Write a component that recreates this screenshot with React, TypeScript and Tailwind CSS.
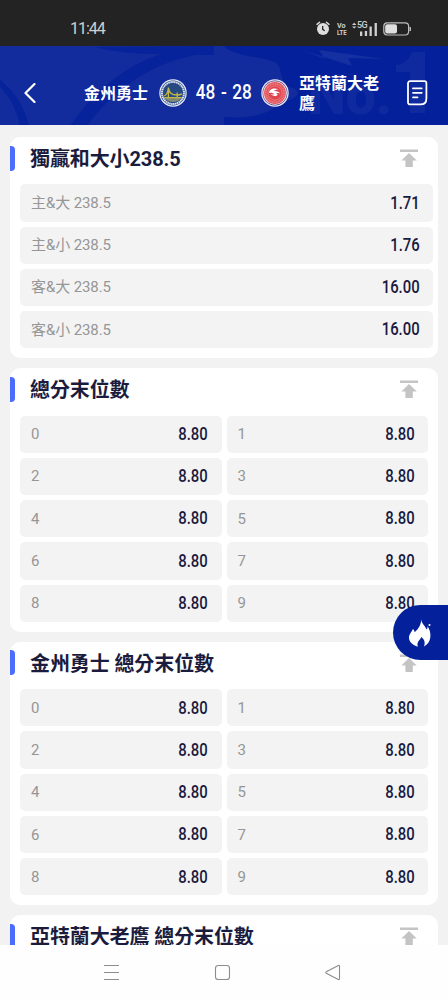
import { clsx } from "clsx";

type Option = { label: string; odds: string };
type Market = { title: string; wide?: boolean; options: Option[] };

const DIGITS: Option[] = Array.from({ length: 10 }, (_, i) => ({ label: String(i), odds: "8.80" }));

const MARKETS: Market[] = [
  {
    title: "獨贏和大小238.5",
    wide: true,
    options: [
      { label: "主&大 238.5", odds: "1.71" },
      { label: "主&小 238.5", odds: "1.76" },
      { label: "客&大 238.5", odds: "16.00" },
      { label: "客&小 238.5", odds: "16.00" },
    ],
  },
  { title: "總分末位數", options: DIGITS },
  { title: "金州勇士 總分末位數", options: DIGITS },
  { title: "亞特蘭大老鷹 總分末位數", options: [] },
];

function StatusBar() {
  return (
    <div className="flex h-[45.5px] shrink-0 items-center bg-[#232323] pl-[70px] pt-[12px] text-[#d0d0d0]">
      <span className="w-[245px] text-[16px] leading-none tracking-[-1px]">11:44</span>
      <svg width="14" height="15" viewBox="0 0 14 15" fill="none" className="ml-[1px]">
        <circle cx="7" cy="8" r="6" fill="#dedede" />
        <path d="M1 3.4 3.6 1.2M13 3.4l-2.6-2.2" stroke="#dedede" strokeWidth="1.4" strokeLinecap="round" />
        <path d="M6.7 5v3.4l2 1.3" stroke="#232323" strokeWidth="1.3" />
      </svg>
      <div className="ml-[7px] w-[10px] text-[8px] font-bold leading-[7px]">
        <div className="origin-left scale-x-[0.9]">Vo</div>
        <div className="origin-left scale-x-[0.75]">LTE</div>
      </div>
      <div className="relative ml-[5px] h-[14px] w-[26px]">
        <svg width="26" height="14" viewBox="0 0 26 14" fill="#d0d0d0">
          <path d="m0 3 2.2-2.3 2.200 2.300zM0 4.400h4.400L2.200 6.600z" />
          <path d="M8 9.500h2.300V14H8zM12.800 9h2.300v5h-2.300zM17.500 4.500h2.300V14h-2.300zM22.600 1h2.300v13h-2.300z" />
        </svg>
        <span className="absolute left-[5px] top-[-1px] text-[9px] font-medium leading-[9px] tracking-[-0.5px]">5G</span>
      </div>
      <svg width="29" height="14" viewBox="0 0 29 14" fill="none" className="ml-[5px]">
        <rect x="0.8" y="0.8" width="24.8" height="12.2" rx="3.4" stroke="#bebebe" strokeWidth="1.2" />
        <rect x="2.2" y="2.2" width="11.8" height="9.4" rx="2" fill="#dedede" />
        <path d="M27.2 5v4" stroke="#bebebe" strokeWidth="1.5" />
      </svg>
    </div>
  );
}

function HeaderArt() {
  return (
    <svg className="absolute inset-0" width="448" height="80" viewBox="0 0 448 80" fill="none">
      <path d="M0 0h448v80H0z" fill="#122b9d" />
      <path d="M95 1c24 6 43 7 66 7-39 13-68 39-91 72h17c25-34 61-62 108-71h19V0z" fill="#06239b" />
      <path d="M0 34c14 11 25 27 29 46h-9C17 64 10 51 0 41z" fill="#06239b" />
      <path d="M224 0c8 10 34 10 51 16 9 7 3 17 14 25 14 3 10 10-2 14-14 6-22 19-63 16v9h224V0z" fill="#04219b" />
      <path d="M302 4l23 9-6-9 64 9-35-1 4 8z" fill="#1530a0" />
      <text x="308" y="67.5" textLength="84" lengthAdjust="spacingAndGlyphs" fill="#0f299e" className="font-[Roboto] text-[56px] font-black">No.</text>
      <path d="M396 19c8-1 13-5 16-13h13v61h-15V26h-14z" fill="#0f299e" />
    </svg>
  );
}

function WarriorsLogo() {
  return (
    <svg width="28" height="28" viewBox="0 0 28 28" fill="none">
      <circle cx="14" cy="14" r="13.7" fill="#e9edf5" />
      <circle cx="14" cy="14" r="12.5" fill="#24468e" />
      <circle cx="14" cy="14" r="11" stroke="#e0e4ea" strokeWidth="1.9" strokeDasharray="1.5 0.45" />
      <circle cx="14" cy="14" r="9.5" fill="#274a80" />
      <path d="M5.500 18.500h17c-3 6-14 6-17 0" fill="#7f8873" />
      <path d="M5 17c3.500-1 4-4.500 4.400-8 1 4.500 2.500 7 8.800 7 2 0 3.400-.4 5-1.200M9.400 8.500v11M18.200 13.500v6M5.300 18.600h17.400" stroke="#c6b648" strokeWidth="1.300" />
    </svg>
  );
}

function HawksLogo() {
  return (
    <svg width="28" height="28" viewBox="0 0 28 28" fill="none">
      <circle cx="14" cy="14" r="13.7" fill="#e8e8f3" />
      <circle cx="14" cy="14" r="12.4" fill="#4b3a83" />
      <circle cx="14" cy="14" r="11.8" fill="#f4e6e9" />
      <circle cx="14" cy="14" r="10.9" fill="#e4535b" />
      <circle cx="14" cy="14" r="9.2" stroke="#ee8c92" strokeWidth="1.3" strokeDasharray="1 0.8" />
      <circle cx="14" cy="14" r="7" fill="#df4650" stroke="#ee9ca1" strokeWidth="0.5" />
      <path d="M8 14c0-3.800 5-5.800 9.500-3.600-2.500 0-4 .6-4.700 1.600 2.700-.3 5.200.6 6.500 2.500-1.600-.5-3-.6-4.300-.4.900.3 1.500.900 1.700 1.600-1 1.800-5.600 1.600-7-.6 1.300.5 2.700.5 3.600.1-1.200-1.200-3.300-1.800-5.300-1.200Z" fill="#fff" />
    </svg>
  );
}

function Header() {
  return (
    <header className="relative h-[79.5px] shrink-0 overflow-hidden bg-[#04219b] text-white">
      <HeaderArt />
      <div className="relative flex h-full items-center pt-[15px]">
        <svg width="12" height="20" viewBox="0 0 12 20" fill="none" className="ml-[24px]">
          <path d="m10.5 1-9 9 9 9" stroke="#fff" strokeWidth="2.2" strokeLinecap="round" strokeLinejoin="round" />
        </svg>
        <span className="ml-[48px] w-[75px] whitespace-nowrap pt-[2px] text-[16px] font-bold leading-5">金州勇士</span>
        <WarriorsLogo />
        <div className="w-[74px] pt-[3px] text-center">
          <span className="inline-block scale-x-[0.88] whitespace-nowrap text-[19.5px] font-medium leading-5 [word-spacing:1.5px]">48 - 28</span>
        </div>
        <HawksLogo />
        <span className="ml-[10px] w-[85px] pt-[2px] text-[16px] font-bold leading-5">亞特蘭大老鷹</span>
        <svg width="21" height="26" viewBox="0 0 21 26" fill="none" className="ml-[23px]">
          <path d="M3 1.2h14.4a2 2 0 0 1 2 2v15.2c0 4-2.2 6-6 6H3a2 2 0 0 1-2-2V3.2a2 2 0 0 1 2-2Z" stroke="#fff" strokeWidth="1.8" />
          <path d="M6 8.4h8.7M6 12.8h8.7M6 17.3h4.5" stroke="#fff" strokeWidth="1.8" strokeLinecap="round" />
        </svg>
      </div>
    </header>
  );
}

function OptionRow({ label, odds }: Option) {
  return (
    <button type="button" className="flex h-[37.25px] items-center justify-between rounded-[5px] bg-[#f3f3f3] pl-[11px] pr-[13.5px] pt-px">
      <span className="text-[15px] leading-none tracking-[-0.1px] text-[#969696]">{label}</span>
      <span className="origin-right scale-x-[0.85] text-[17.5px] font-medium leading-none text-[#191a40]">{odds}</span>
    </button>
  );
}

function MarketCard({ title, wide, options }: Market) {
  return (
    <section className="shrink-0 rounded-[10px] bg-white pb-[10px]">
      <div className="flex h-[47.3px] items-start">
        <div className="mt-[8.5px] h-[25px] w-[5px] rounded-r-[4px] bg-[#4c6dfb]" />
        <h2 className="ml-[15px] mt-[9px] grow whitespace-nowrap text-[20px] font-bold leading-[26px] tracking-[-0.1px] text-[#1b1c3d]">{title}</h2>
        <svg width="18" height="18" viewBox="0 0 18 18" fill="#c4c4c4" className="mr-[20px] mt-[12px]">
          <path d="M0 .5h18v2.4H0zM9 4l7.8 7.4h-4V18H5.4v-6.6h-4z" />
        </svg>
      </div>
      <div className={clsx("ml-[10px] grid gap-[5px]", wide ? "mr-[5px] grid-cols-1" : "mr-[10px] grid-cols-2")}>
        {options.map((o) => (
          <OptionRow key={o.label} {...o} />
        ))}
      </div>
    </section>
  );
}

function NavBar() {
  return (
    <nav className="flex h-[55px] shrink-0 items-center bg-[#fefefe]">
      <svg width="448" height="55" viewBox="0 0 448 55" fill="none" stroke="#8d8d8d" strokeWidth="1.1">
        <path d="M104 20.5h15M104 27.5h15M104 34.5h15" />
        <rect x="215.5" y="20.5" width="14" height="14" rx="2.8" />
        <path d="M339.500 21.200v12.600q0 1.200-1.200.6l-12-6.200q-1-.7 0-1.400l12-6.200q1.200-.6 1.200.6Z" />
      </svg>
    </nav>
  );
}

export default function App() {
  return (
    <div className="relative flex h-[1000px] w-[448px] flex-col overflow-hidden bg-[#f2f2f2] font-[Roboto,'Noto_Sans_CJK_TC',sans-serif]">
      <StatusBar />
      <Header />
      <main className="flex min-h-0 flex-1 flex-col gap-[10px] overflow-hidden px-[10px] pt-[12px]">
        {MARKETS.map((m) => (
          <MarketCard key={m.title} {...m} />
        ))}
      </main>
      <NavBar />
      <button type="button" aria-label="熱門" className="absolute right-0 top-[605px] flex h-[55px] w-[55px] items-center rounded-l-full bg-[#04219b] pl-[15px]">
        <svg width="24" height="30" viewBox="0 0 24 30" fill="#fff">
          <path d="M13 1c.5 5 4 6 5.500 10.500C19.500 10.500 19.800 9 19.500 8c2.300 3.500 3.300 7 2.800 11.500-.5 4-2.600 7-6.300 9 1.500-4 .5-7-2.700-9.500-.5 2-2.300 3-3.300 5-.7 1.500-.6 3-.2 4.700C4.500 27 1.500 24 1 20.500c-.3-4 2.500-6.500 4-9.500 1 1 1.500 2 1.700 3.300C10 11 13.500 7 13 1Z" />
          <circle cx="21.500" cy="7" r="1" />
        </svg>
      </button>
    </div>
  );
}
